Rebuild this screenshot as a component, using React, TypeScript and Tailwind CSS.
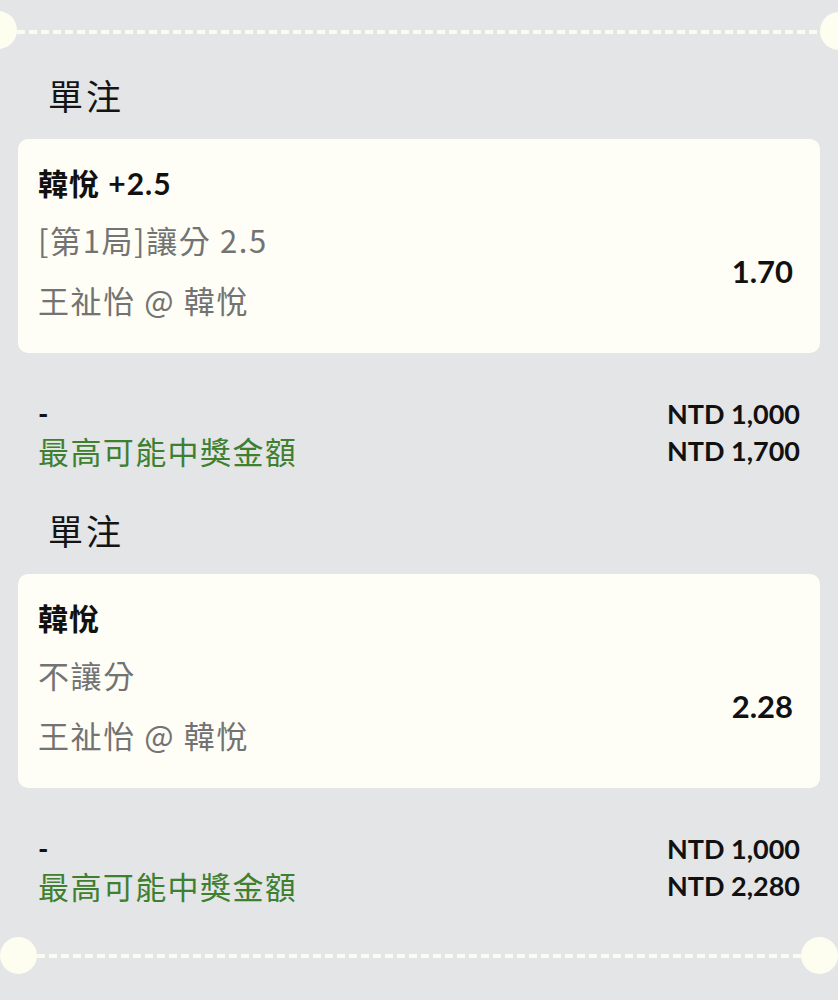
import React from "react";

const dash =
  "h-[4px] w-full bg-[repeating-linear-gradient(to_right,#fbfbf1_0_8px,transparent_8px_12px)]";

function Bet({
  title,
  line2,
  line3,
  odds,
  stake,
  payout,
}: {
  title: string;
  line2: string;
  line3: string;
  odds: string;
  stake: string;
  payout: string;
}) {
  return (
    <div>
      <div className="pl-[48px] h-[44px] leading-[44px] text-[35px] tracking-[3px] text-[#141414] font-['Noto_Sans_CJK_TC',sans-serif]">
        單注
      </div>
      <div className="mt-[22px] mx-[18px] h-[214px] rounded-[10px] bg-[#fefef6] flex justify-between pl-[20px] pr-[27px]">
        <div className="flex flex-col">
          <div className="mt-[22px] h-[44px] leading-[44px] text-[30px] font-bold text-[#111] font-['Lato','Noto_Sans_CJK_TC',sans-serif] tracking-[1px]">
            {title}
          </div>
          <div className="mt-[13px] h-[44px] leading-[44px] text-[31px] tracking-[1.6px] text-[#737373] font-['Noto_Sans_CJK_TC',sans-serif]">
            {line2}
          </div>
          <div className="mt-[16px] h-[44px] leading-[44px] text-[31px] tracking-[1.6px] text-[#737373] font-['Noto_Sans_CJK_TC',sans-serif]">
            {line3}
          </div>
        </div>
        <div className="mt-[110px] h-[44px] leading-[44px] text-[31px] font-bold text-[#111] font-['Lato',sans-serif]">
          {odds}
        </div>
      </div>
      <div className="mt-[42px] mx-[18px] pl-[20px] pr-[20px] grid grid-cols-[1fr_auto] leading-[37px]">
        <div className="h-[37px] text-[28px] font-bold text-[#111] font-['Lato',sans-serif]">-</div>
        <div className="h-[37px] text-right text-[27px] font-bold text-[#111] font-['Lato',sans-serif]">
          {stake}
        </div>
        <div className="h-[37px] text-[31px] tracking-[1.4px] text-[#3f7f30] font-['Noto_Sans_CJK_TC',sans-serif]">
          最高可能中獎金額
        </div>
        <div className="h-[37px] text-right text-[27px] font-bold text-[#111] font-['Lato',sans-serif]">
          {payout}
        </div>
      </div>
    </div>
  );
}

export default function App() {
  return (
    <div className="relative w-[838px] h-[1000px] overflow-hidden bg-[#e4e5e7]">
      <div className="absolute left-[-21px] top-[11px] w-[38px] h-[38px] rounded-full bg-[#fdfdf0]" />
      <div className="absolute left-[820px] top-[12px] w-[38px] h-[38px] rounded-full bg-[#fdfdf0]" />
      <div className="absolute left-0 top-[937px] w-[37px] h-[37px] rounded-full bg-[#fdfdf0]" />
      <div className="absolute left-[801px] top-[937px] w-[37px] h-[37px] rounded-full bg-[#fdfdf0]" />

      <div className="pt-[30px] pl-[17px] pr-[18px]">
        <div className={dash} />
      </div>
      <div className="mt-[39px]">
        <Bet
          title="韓悅 +2.5"
          line2="[第1局]讓分 2.5"
          line3="王祉怡 @ 韓悅"
          odds="1.70"
          stake="NTD 1,000"
          payout="NTD 1,700"
        />
      </div>
      <div className="mt-[39px]">
        <Bet
          title="韓悅"
          line2="不讓分"
          line3="王祉怡 @ 韓悅"
          odds="2.28"
          stake="NTD 1,000"
          payout="NTD 2,280"
        />
      </div>
      <div className="mt-[50px] pl-[37px] pr-[37px]">
        <div className={dash} />
      </div>
    </div>
  );
}
